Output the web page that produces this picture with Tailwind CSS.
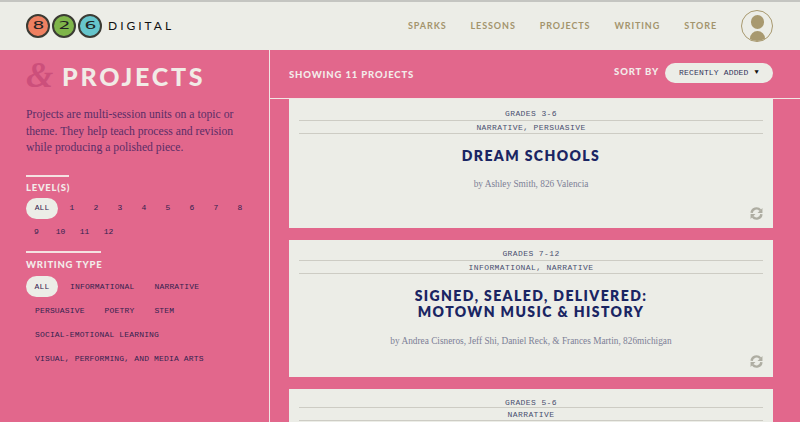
<!DOCTYPE html>
<html lang="en">
<head>
  <meta charset="UTF-8" />
  <meta name="viewport" content="width=device-width, initial-scale=1.0" />
  <title>826 Digital - Projects</title>
  <script src="https://cdn.jsdelivr.net/npm/@tailwindcss/browser@4"></script>
</head>
<body class="h-[422px] w-[800px] overflow-hidden bg-[#e2678c] font-['Lato',sans-serif]">
  <!-- header -->
  <header class="h-[50px] bg-[#ecede7] border-t-2 border-[#c4c5c1] flex items-center pb-px pl-[26px] pr-[27px]">
    <div class="flex items-center">
      <div class="w-[24px] h-[24px] mr-[2px] shrink-0 rounded-full bg-[#ef8061] border-2 border-[#3b3b34] flex items-center justify-center font-['DejaVu_Sans',sans-serif] text-[11px] leading-none text-[#222]"><span class="scale-x-[1.7]">8</span></div>
      <div class="w-[24px] h-[24px] mr-[2px] shrink-0 rounded-full bg-[#7fb54a] border-2 border-[#3b3b34] flex items-center justify-center font-['DejaVu_Sans',sans-serif] text-[11px] leading-none text-[#222]"><span class="scale-x-[1.7]">2</span></div>
      <div class="w-[24px] h-[24px] shrink-0 rounded-full bg-[#66c5cc] border-2 border-[#3b3b34] flex items-center justify-center font-['DejaVu_Sans',sans-serif] text-[11px] leading-none text-[#222]"><span class="scale-x-[1.7]">6</span></div>
      <span class="ml-[6px] text-[12px] tracking-[0.25em] text-[#111]">DIGITAL</span>
    </div>
    <nav class="ml-auto flex items-center gap-[24px] text-[9px] font-bold tracking-[0.1em] text-[#a3946c]">
      <a>SPARKS</a>
      <a>LESSONS</a>
      <a>PROJECTS</a>
      <a>WRITING</a>
      <a>STORE</a>
    </nav>
    <div class="ml-6 w-[32px] h-[32px] shrink-0 rounded-full border border-[#a8996f] overflow-hidden flex flex-col items-center">
      <div class="w-[13px] h-[14px] shrink-0 mt-[4px] rounded-full bg-[#a8996f]"></div>
      <div class="w-[15px] h-[15px] shrink-0 mt-[2px] rounded-full bg-[#a8996f]"></div>
    </div>
  </header>

  <div class="flex h-[372px]">
    <!-- sidebar -->
    <aside class="w-[270px] shrink-0 border-r border-[#f1e6e4] pl-[26px] pr-[16px]">
      <h1 class="flex items-center h-[53px] text-[25px] font-black tracking-[0.11em] text-[#f1ebe6]">
        <span class="w-[36px] font-['Liberation_Serif',serif] font-bold italic text-[35px] tracking-normal text-[#cc4f7b]">&amp;</span>PROJECTS
      </h1>
      <p class="mt-[4px] font-['Liberation_Serif',serif] text-[11.7px] leading-[16.6px] text-[#5b2d67]">Projects are multi-session units on a topic or theme. They help teach process and revision while producing a polished piece.</p>

      <div class="mt-[18px] w-[43px] h-0.5 bg-[#f4e2e2]"></div>
      <h2 class="mt-[2px] text-[9.5px] leading-[18px] font-black tracking-[0.08em] text-[#f3ecea]">LEVEL(S)</h2>
      <ul class="mt-px flex flex-wrap font-['Liberation_Mono',monospace] text-[8px] text-[#33224f]">
        <li class="w-[32px] h-[21px] mb-[3px] mr-[2px] rounded-full bg-[#ecede7] flex items-center justify-center">ALL</li>
        <li class="w-[24px] h-[21px] mb-[3px] flex items-center justify-center">1</li>
        <li class="w-[24px] h-[21px] mb-[3px] flex items-center justify-center">2</li>
        <li class="w-[24px] h-[21px] mb-[3px] flex items-center justify-center">3</li>
        <li class="w-[24px] h-[21px] mb-[3px] flex items-center justify-center">4</li>
        <li class="w-[24px] h-[21px] mb-[3px] flex items-center justify-center">5</li>
        <li class="w-[24px] h-[21px] mb-[3px] flex items-center justify-center">6</li>
        <li class="w-[24px] h-[21px] mb-[3px] flex items-center justify-center">7</li>
        <li class="w-[24px] h-[21px] mb-[3px] flex items-center justify-center">8</li>
        <li class="w-[21px] h-[21px] flex items-center justify-center">9</li>
        <li class="w-[27px] h-[21px] flex items-center justify-center">10</li>
        <li class="w-[21px] h-[21px] flex items-center justify-center">11</li>
        <li class="w-[27px] h-[21px] flex items-center justify-center">12</li>
      </ul>

      <div class="mt-[8px] w-[75px] h-0.5 bg-[#f4e2e2]"></div>
      <h2 class="mt-[3px] text-[9.5px] leading-[18px] font-black tracking-[0.08em] text-[#f3ecea]">WRITING TYPE</h2>
      <ul class="mt-px font-['Liberation_Mono',monospace] text-[8px] tracking-[0.02em] text-[#33224f]">
        <li class="flex items-center h-[24px]">
          <span class="w-[32px] h-[21px] rounded-full bg-[#ecede7] flex items-center justify-center">ALL</span>
          <span class="ml-[12px]">INFORMATIONAL</span>
          <span class="ml-[20px]">NARRATIVE</span>
        </li>
        <li class="flex items-center h-[24px] pl-[9px]">
          <span>PERSUASIVE</span>
          <span class="ml-[20px]">POETRY</span>
          <span class="ml-[20px]">STEM</span>
        </li>
        <li class="flex items-center h-[24px] pl-[9px]">SOCIAL-EMOTIONAL LEARNING</li>
        <li class="flex items-center h-[24px] pl-[9px]">VISUAL, PERFORMING, AND MEDIA ARTS</li>
      </ul>
    </aside>

    <!-- results -->
    <main class="flex-1 min-w-0 flex flex-col">
      <div class="h-[49px] shrink-0 border-b border-[#f1e6e4] pl-[19px] pr-[27px] flex items-center text-[9.5px] font-black tracking-[0.09em] text-[#f3ecea]">
        <span class="pt-[2px]">SHOWING 11 PROJECTS</span>
        <div class="ml-auto flex items-center pb-[3px]">
          <span>SORT BY</span>
          <div class="ml-[6px] w-[108px] h-5 rounded-full bg-[#ecede7] flex items-center justify-center gap-[6px] font-['Liberation_Mono',monospace] text-[8px] font-normal tracking-[0.02em] text-[#33335a]">
            <span>RECENTLY ADDED</span><span class="text-[7px] text-[#111]">▼</span>
          </div>
        </div>
      </div>

      <div class="flex-1 overflow-hidden pl-[19px] pr-[27px] flex flex-col gap-[12px]">
        <!-- card 1 -->
        <article class="relative h-[129px] shrink-0 bg-[#ecede7] px-[10px] text-center">
          <p class="h-[22px] pt-[9px] border-b border-[#cdccc4] font-['Liberation_Mono',monospace] text-[8px] leading-[11px] tracking-[0.05em] text-[#4a4f70]">GRADES 3-6</p>
          <p class="h-[13px] border-b border-[#cdccc4] font-['Liberation_Mono',monospace] text-[8px] leading-[13px] tracking-[0.05em] text-[#4a4f70]">NARRATIVE, PERSUASIVE</p>
          <h3 class="mt-[14px] text-[14px] leading-[16px] font-extrabold tracking-[0.1em] text-[#1a2563]">DREAM SCHOOLS</h3>
          <p class="mt-[14px] font-['Liberation_Serif',serif] text-[9.3px] leading-[12px] text-[#7c8096]">by Ashley Smith, 826 Valencia</p>
          <svg class="absolute right-[10px] bottom-[8px] w-[13px] h-[13px]" viewBox="0 0 24 24" fill="none" stroke="#aeada2" stroke-width="4.5">
            <path d="M3 11a9 9 0 0 1 16-5M21 13a9 9 0 0 1-16 5"/>
            <path d="M23 2v9h-9z" fill="#aeada2" stroke="none"/>
            <path d="M1 22v-9h9z" fill="#aeada2" stroke="none"/>
          </svg>
        </article>
        <!-- card 2 -->
        <article class="relative h-[137px] shrink-0 bg-[#ecede7] px-[10px] text-center">
          <p class="h-[21px] pt-[8px] border-b border-[#cdccc4] font-['Liberation_Mono',monospace] text-[8px] leading-[11px] tracking-[0.05em] text-[#4a4f70]">GRADES 7-12</p>
          <p class="h-[13px] border-b border-[#cdccc4] font-['Liberation_Mono',monospace] text-[8px] leading-[13px] tracking-[0.05em] text-[#4a4f70]">INFORMATIONAL, NARRATIVE</p>
          <h3 class="mt-[14px] text-[14px] leading-[16px] font-extrabold tracking-[0.1em] text-[#1a2563]">SIGNED, SEALED, DELIVERED:<br>MOTOWN MUSIC &amp; HISTORY</h3>
          <p class="mt-[15px] font-['Liberation_Serif',serif] text-[9.3px] leading-[12px] text-[#7c8096]">by Andrea Cisneros, Jeff Shi, Daniel Reck, &amp; Frances Martin, 826michigan</p>
          <svg class="absolute right-[10px] bottom-[9px] w-[13px] h-[13px]" viewBox="0 0 24 24" fill="none" stroke="#aeada2" stroke-width="4.5">
            <path d="M3 11a9 9 0 0 1 16-5M21 13a9 9 0 0 1-16 5"/>
            <path d="M23 2v9h-9z" fill="#aeada2" stroke="none"/>
            <path d="M1 22v-9h9z" fill="#aeada2" stroke="none"/>
          </svg>
        </article>
        <!-- card 3 -->
        <article class="h-[137px] shrink-0 bg-[#ecede7] px-[10px] text-center">
          <p class="h-[19px] pt-[8px] border-b border-[#cdccc4] font-['Liberation_Mono',monospace] text-[8px] leading-[11px] tracking-[0.05em] text-[#4a4f70]">GRADES 5-6</p>
          <p class="h-[13px] border-b border-[#cdccc4] font-['Liberation_Mono',monospace] text-[8px] leading-[13px] tracking-[0.05em] text-[#4a4f70]">NARRATIVE</p>
        </article>
      </div>
    </main>
  </div>
</body>
</html>
